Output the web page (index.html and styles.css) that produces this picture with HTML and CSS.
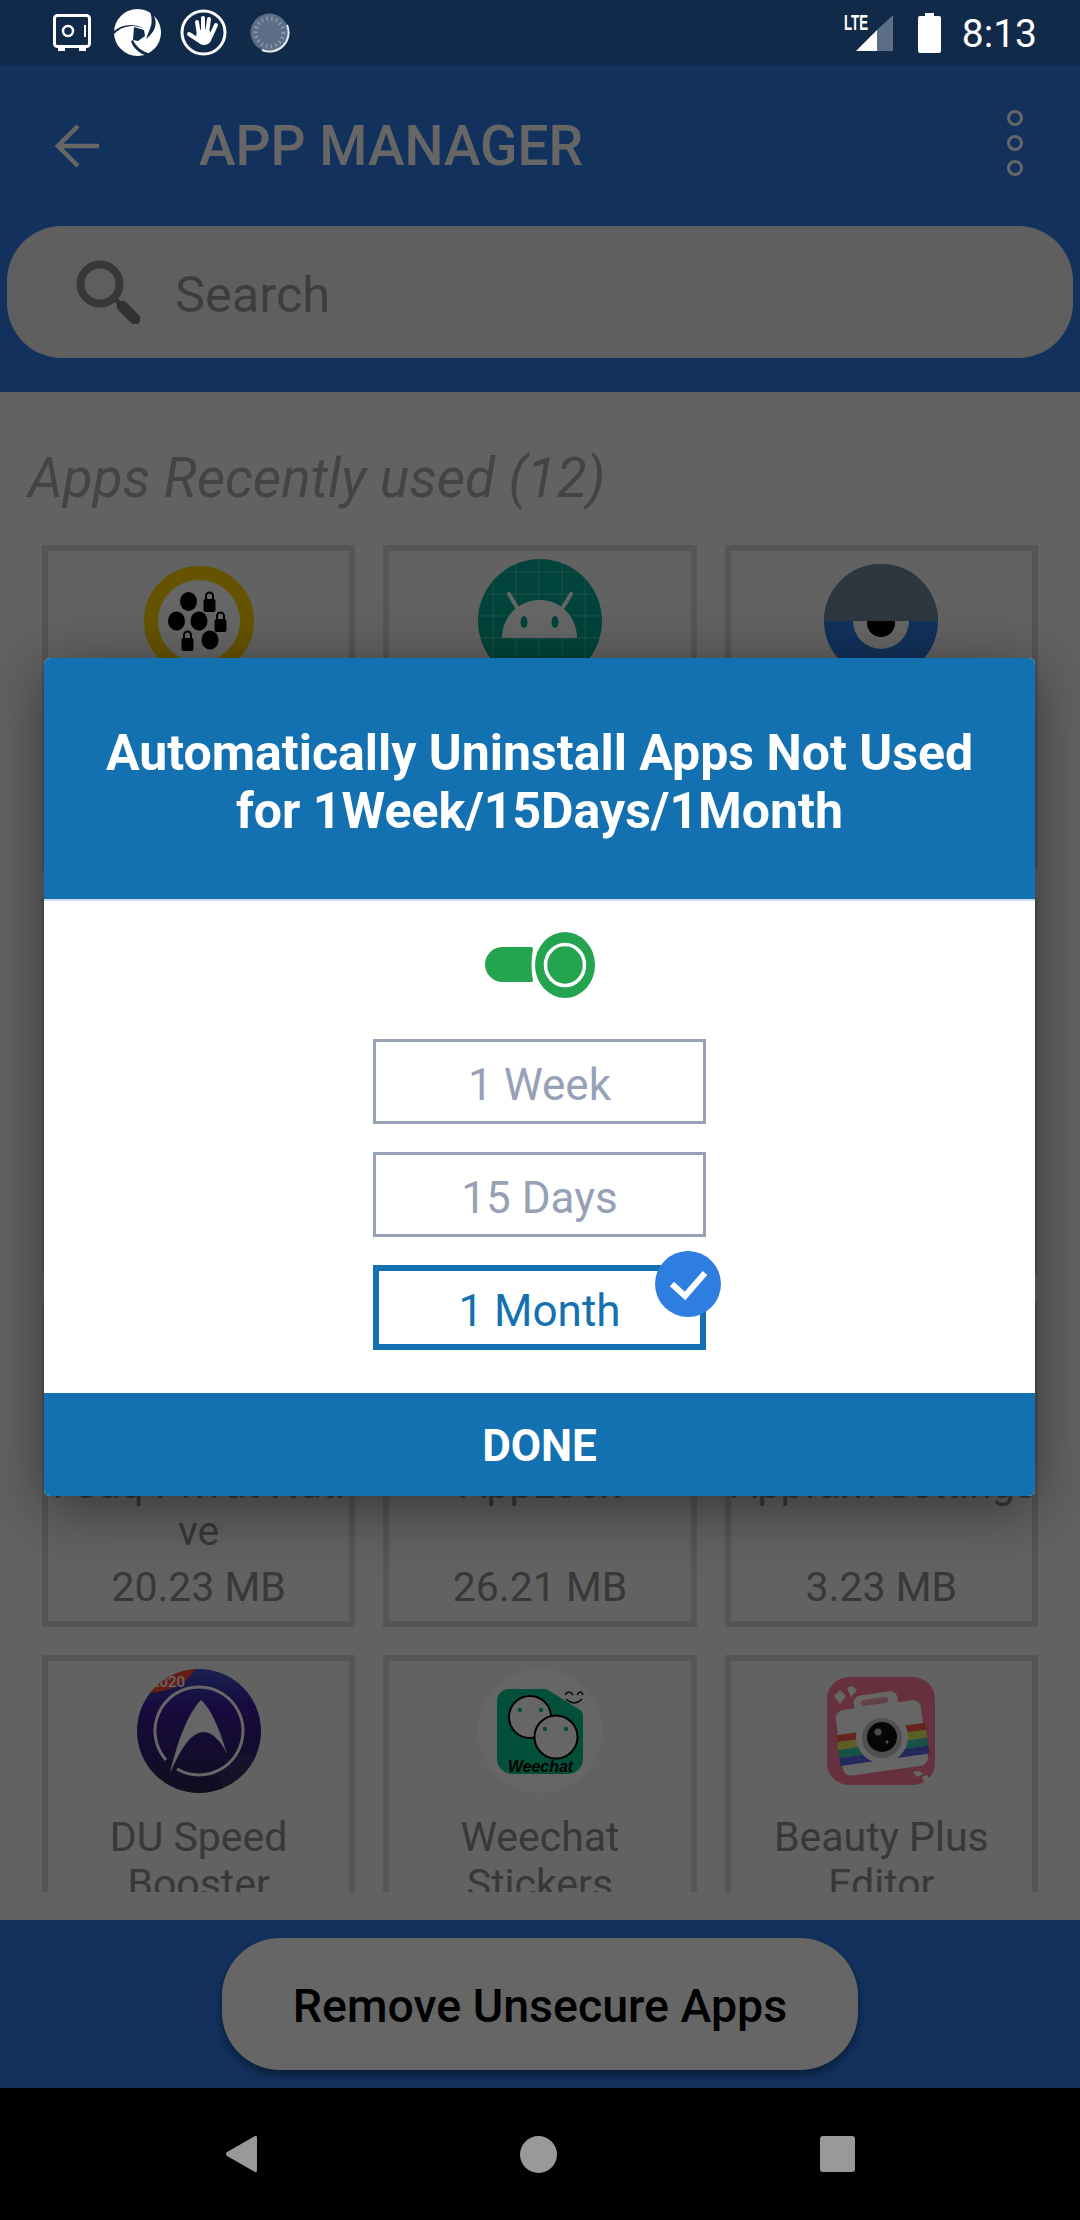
FILE: index.html
```html
<!DOCTYPE html>
<html lang="en">
<head>
  <meta charset="UTF-8" />
  <meta name="viewport" content="width=device-width, initial-scale=1.0"/>
  <title>App Manager</title>
  <link rel="stylesheet" href="styles.css">
</head>
<body>
  <!-- Status bar -->
  <div class="status-bar">
    <div class="status-left">
      <svg class="safe-icon" width="38" height="38" viewBox="0 0 38 38">
        <rect x="1.5" y="1.5" width="35" height="31" rx="3" fill="none" stroke="#fff" stroke-width="3"/>
        <rect x="5" y="33" width="7" height="4" fill="#fff"/>
        <rect x="26" y="33" width="7" height="4" fill="#fff"/>
        <circle cx="15" cy="17" r="5" fill="none" stroke="#fff" stroke-width="2.5"/>
        <rect x="31" y="11" width="2" height="12" fill="#fff"/>
      </svg>
      <svg class="shutter-icon" width="47" height="47" viewBox="0 0 47 47">
        <circle cx="23.5" cy="23.5" r="23.5" fill="#fff"/>
        <path d="M0 22C8 15 19 14 29 19L20 17C12 17 6 19 0 25Z" fill="#112a49"/>
        <path d="M39 5C44 14 42 22 32 30L37 17C38 12 38 8 36 3Z" fill="#112a49"/>
        <path d="M19 31C22 38 29 43 37 45L33 47C25 44 19 39 17 32Z" fill="#112a49"/>
        <path d="M20 18L30 21L31 27L24 32L19 31Z" fill="#112a49"/>
      </svg>
      <svg class="hand-icon" width="47" height="47" viewBox="0 0 47 47">
        <circle cx="23.5" cy="23.5" r="21.5" fill="none" stroke="#fff" stroke-width="3"/>
        <circle cx="24" cy="28" r="8" fill="#fff"/>
        <path d="M19 26L17 13M23 24V9M27 24L29 10M31 27L36 16M18 31L9 25" stroke="#fff" stroke-width="4" stroke-linecap="round" fill="none"/>
      </svg>
      <svg class="loader-icon" width="40" height="40" viewBox="0 0 40 40">
        <circle cx="19.5" cy="19.5" r="19" fill="#5b6d87"/>
        <circle cx="19.5" cy="19.5" r="14" fill="none" stroke="#8a99ae" stroke-width="4" stroke-dasharray="1.6 3.2"/>
        <path d="M37 12A19 19 0 0 1 12 37" fill="none" stroke="#e8ecf0" stroke-width="2"/>
      </svg>
    </div>
    <div class="status-right">
      <svg class="signal-icon" width="50" height="46" viewBox="0 -6 50 46">
        <path d="M12 38L33 17V38Z" fill="#fff"/>
        <path d="M33 17L49 2V38H33Z" fill="#5b6d87"/>
        <text x="0" y="17" class="lte-label" textLength="24" lengthAdjust="spacingAndGlyphs">LTE</text>
      </svg>
      <svg class="battery-icon" width="23" height="40" viewBox="0 0 23 40">
        <path d="M7 0H16V3H21Q23 3 23 5V38Q23 40 21 40H2Q0 40 0 38V5Q0 3 2 3H7Z" fill="#fff"/>
      </svg>
      <span class="clock">8:13</span>
    </div>
  </div>

  <div class="app">
    <header class="app-header">
      <div class="toolbar">
        <svg class="back-icon" width="44" height="44" viewBox="0 0 44 44">
          <path d="M44 22H4M23 2L3 22L23 42" fill="none" stroke="#fff" stroke-width="4.5"/>
        </svg>
        <h1 class="toolbar-title">APP MANAGER</h1>
        <div class="more-dots"><i></i><i></i><i></i></div>
      </div>
      <div class="search-box">
        <svg class="search-icon" width="64" height="64" viewBox="0 0 64 64">
          <circle cx="24" cy="24" r="19.5" fill="none" stroke="#8c8c8c" stroke-width="8"/>
          <path d="M38 38L46 46" stroke="#8c8c8c" stroke-width="5"/>
          <path d="M46 46L59 59" stroke="#7c7c7c" stroke-width="11" stroke-linecap="round"/>
        </svg>
        <span class="search-text">Search</span>
      </div>
    </header>

    <main class="content">
      <h2 class="section-title">Apps Recently used (12)</h2>
      <div class="app-list">
        <!-- row 1, the dialog covers everything under the icons -->
        <div class="card">
          <svg class="card-icon" width="124" height="124" viewBox="0 0 124 124">
            <circle cx="62" cy="62" r="48" fill="#fff" stroke="#ffd000" stroke-width="14"/>
            <ellipse cx="51.5" cy="42.5" rx="8.5" ry="9.5"/>
            <ellipse cx="39.5" cy="62" rx="8.5" ry="9.5"/>
            <ellipse cx="62" cy="62" rx="8.5" ry="9.5"/>
            <ellipse cx="73" cy="81" rx="8.5" ry="9.5"/>
            <g id="lock">
              <rect x="66.500" y="40" width="12" height="13" rx="2"/>
              <path d="M69 41V37A3.500 3.500 0 0 1 76 37V41" fill="none" stroke="#000" stroke-width="2"/>
            </g>
            <use href="#lock" x="11" y="20"/>
            <use href="#lock" x="-22" y="39"/>
          </svg>
          <div class="app-name"></div>
          <div class="app-size"></div>
        </div>
        <div class="card">
          <svg class="card-icon" width="124" height="124" viewBox="0 0 124 124">
            <circle cx="62" cy="62" r="62" fill="#00ab95"/>
            <path d="M0 13H124M0 35H124M0 57H124M0 79H124M0 101H124M15 0V124M38 0V124M61 0V124M84 0V124M107 0V124" stroke="#fff" stroke-opacity=".3" stroke-width="1"/>
            <path d="M24 79C24 58 40 41 62 41C83 41 99 58 99 79Z" fill="#fff"/>
            <path d="M40 50L31 35M84 50L93 35" stroke="#fff" stroke-width="4" stroke-linecap="round"/>
            <ellipse cx="46" cy="63" rx="3.500" ry="6" fill="#00ab95"/>
            <ellipse cx="77" cy="63" rx="3.500" ry="6" fill="#00ab95"/>
          </svg>
          <div class="app-name"></div>
          <div class="app-size"></div>
        </div>
        <div class="card">
          <svg class="card-icon" width="124" height="124" viewBox="0 0 124 124">
            <circle cx="62" cy="62" r="57" fill="#2d7be0"/>
            <ellipse cx="62" cy="62" rx="28" ry="28" fill="#fff"/>
            <circle cx="62" cy="64" r="14"/>
            <path d="M5 62A57 57 0 0 1 119 62Z" fill="#6e8a9e"/>
          </svg>
          <div class="app-name"></div>
          <div class="app-size"></div>
        </div>

        <!-- row 2, fully behind the dialog -->
        <div class="card card-tall"></div>
        <div class="card card-tall"></div>
        <div class="card card-tall"></div>

        <!-- row 3 -->
        <div class="card">
          <div class="card-icon"></div>
          <div class="app-name">Foaq-Privat Nati<br>ve</div>
          <div class="app-size">20.23 MB</div>
        </div>
        <div class="card">
          <div class="card-icon"></div>
          <div class="app-name">AppLock</div>
          <div class="app-size">26.21 MB</div>
        </div>
        <div class="card">
          <div class="card-icon"></div>
          <div class="app-name">Appfam&nbsp;Settings</div>
          <div class="app-size">3.23 MB</div>
        </div>

        <!-- row 4 -->
        <div class="card">
          <svg class="card-icon" width="124" height="124" viewBox="0 0 124 124">
            <defs>
              <linearGradient id="duBg" x1="0" y1="0" x2="0" y2="1">
                <stop offset="0" stop-color="#3f55c8"/>
                <stop offset=".3" stop-color="#3a1c9c"/>
                <stop offset="1" stop-color="#2b1f4c"/>
              </linearGradient>
              <clipPath id="duClip"><circle cx="62" cy="62" r="62"/></clipPath>
            </defs>
            <circle cx="62" cy="62" r="62" fill="url(#duBg)"/>
            <g clip-path="url(#duClip)">
              <path d="M0 0H58C50 14 36 22 12 24H0Z" fill="#ff4a36"/>
              <text x="14" y="18" class="badge-year">2020</text>
              <circle cx="105" cy="108" r="22" fill="#fff" fill-opacity=".06"/>
            </g>
            <path d="M29 91A44 44 0 1 1 40 100" fill="none" stroke="#fff" stroke-width="3"/>
            <path d="M64 31C50 45 40 75 33 104C42 85 52 63 67 63C75 63 84 72 90 85C84 65 76 42 64 31Z" fill="#fff"/>
          </svg>
          <div class="app-name">DU Speed Booster</div>
        </div>
        <div class="card">
          <svg class="card-icon" width="124" height="124" viewBox="0 0 124 124">
            <circle cx="62" cy="62" r="62" fill="#fff"/>
            <path d="M31 20H66A6 6 0 0 1 70 21L102 41A6 6 0 0 1 105 46V90A15 15 0 0 1 90 105H34A15 15 0 0 1 19 90V32A12 12 0 0 1 31 20Z" fill="#06c78f"/>
            <circle cx="52" cy="48" r="21" fill="#fff" stroke="#000" stroke-width="2"/>
            <circle cx="78" cy="68" r="21.500" fill="#fff" stroke="#000" stroke-width="2"/>
            <circle cx="42" cy="41" r="2.200" fill="#06c78f"/>
            <circle cx="63" cy="41" r="2.200" fill="#06c78f"/>
            <circle cx="67" cy="60" r="2.200" fill="#06c78f"/>
            <circle cx="88" cy="60" r="2.200" fill="#06c78f"/>
            <path d="M87 26Q91 20 95 26M99 26Q103 20 105 26M88 30Q96 38 104 30" fill="none" stroke="#222" stroke-width="1.500"/>
            <text x="30" y="103" class="weechat-label" textLength="65" lengthAdjust="spacingAndGlyphs">Weechat</text>
          </svg>
          <div class="app-name">Weechat Stickers</div>
        </div>
        <div class="card">
          <svg class="card-icon" width="124" height="124" viewBox="0 0 124 124">
            <rect x="8" y="8" width="108" height="108" rx="22" fill="#ff7a96"/>
            <g transform="rotate(-8 62 70)">
              <rect x="40" y="24" width="44" height="20" rx="7" fill="#fff"/>
              <rect x="20" y="36" width="86" height="66" rx="8" fill="#fff"/>
              <rect x="47" y="29" width="28" height="6" rx="3" fill="#f7a8b8"/>
              <rect x="18" y="60" width="90" height="7" fill="#ff5a50"/>
              <rect x="18" y="67" width="90" height="8" fill="#e6ea60"/>
              <rect x="18" y="75" width="90" height="8" fill="#3ecab0"/>
              <rect x="18" y="83" width="90" height="8" fill="#5a68e6"/>
            </g>
            <circle cx="63" cy="68" r="26" fill="#fff"/>
            <circle cx="63" cy="69" r="20" fill="#c8c8c8"/>
            <circle cx="63" cy="68" r="15" fill="#111"/>
            <circle cx="59" cy="63" r="3.500" fill="#bbb"/>
            <circle cx="68" cy="73" r="1.500" fill="#ccc"/>
            <path d="M15 27L21 21L27 27L21 35Z" fill="#fff"/>
            <path d="M28 19L33 17L38 21L32 28Z" fill="#fff"/>
            <path d="M94 103L100 102L104 105L98 108Z" fill="#fff"/>
            <path d="M103 108L108 106L110 110L105 113Z" fill="#fff"/>
          </svg>
          <div class="app-name">Beauty Plus Editor</div>
        </div>
      </div>
    </main>

    <footer class="app-footer">
      <button class="remove-btn">Remove Unsecure Apps</button>
    </footer>

    <div class="scrim"></div>

    <!-- Dialog -->
    <section class="dialog">
      <div class="dialog-head">
        Automatically Uninstall Apps Not Used<br>for 1Week/15Days/1Month
      </div>
      <div class="dialog-body">
        <svg class="toggle" width="110" height="66" viewBox="0 0 110 66">
          <path d="M17.500 15H46Q48 15 48 17Q45 33 48 49Q48 50 46 50H17.500A17.500 17.500 0 0 1 17.500 15Z" fill="#24a44f"/>
          <ellipse cx="80" cy="33" rx="30" ry="33" fill="#24a44f"/>
          <ellipse cx="80" cy="33" rx="19.500" ry="20.500" fill="none" stroke="#fff" stroke-width="3.500"/>
        </svg>
        <div class="option">1 Week</div>
        <div class="option">15 Days</div>
        <div class="option option-active">
          1 Month
          <svg class="option-check" width="66" height="66" viewBox="0 0 66 66">
            <circle cx="33" cy="33" r="33" fill="#2e7de1"/>
            <path d="M17 33L30 45L50 22" fill="none" stroke="#fff" stroke-width="6"/>
          </svg>
        </div>
      </div>
      <div class="dialog-done">DONE</div>
    </section>
  </div>

  <!-- Nav bar -->
  <nav class="nav-bar">
    <svg width="32" height="38" viewBox="0 0 32 38"><path d="M30 1Q32 0 32 3V35Q32 38 30 37L2 21Q0 19 2 17Z" fill="#999"/></svg>
    <svg width="37" height="37" viewBox="0 0 37 37"><circle cx="18.500" cy="18.500" r="18.500" fill="#999"/></svg>
    <svg width="35" height="36" viewBox="0 0 35 36"><rect width="35" height="36" rx="3" fill="#999"/></svg>
  </nav>
</body>
</html>
```

FILE: styles.css
```css
* {
  box-sizing: border-box;
  margin: 0;
  padding: 0;
}
body {
  width: 1080px;
  height: 2220px;
  display: flex;
  flex-direction: column;
  overflow: hidden;
  font-family: Roboto, sans-serif;
  background: #000;
}

/* status bar */
.status-bar {
  height: 65px;
  flex: none;
  display: flex;
  justify-content: space-between;
  align-items: center;
  background: #112a49;
  padding: 0 43px 0 53px;
}
.status-left {
  display: flex;
  align-items: center;
}
.shutter-icon { margin-left: 23px; }
.hand-icon { margin-left: 19px; }
.loader-icon { margin-left: 23px; }
.status-right {
  display: flex;
  align-items: center;
}
.signal-icon { margin-bottom: 6px; }
.lte-label {
  font-family: "Liberation Sans", sans-serif;
  font-size: 22px;
  font-weight: 700;
  fill: #fff;
}
.battery-icon { margin-left: 24px; }
.clock {
  margin-left: 21px;
  padding-top: 2px;
  color: #fff;
  font-size: 39px;
  line-height: 44px;
}

.app {
  flex: 1;
  min-height: 0;
  position: relative;
  display: flex;
  flex-direction: column;
}

/* header */
.app-header {
  flex: none;
  height: 327px;
  background: #2d7be6;
  padding: 0 7px;
}
.toolbar {
  height: 161px;
  display: flex;
  align-items: center;
  padding: 0 50px 0 48px;
}
.toolbar-title {
  flex: 1;
  margin-left: 100px;
  color: #fff;
  font-size: 55px;
  font-weight: 500;
}
.more-dots {
  display: flex;
  flex-direction: column;
  gap: 9px;
  margin-bottom: 5px;
}
.more-dots i {
  display: block;
  width: 16px;
  height: 16px;
  border: 3px solid #fff;
  border-radius: 50%;
}
.search-box {
  height: 132px;
  display: flex;
  align-items: center;
  background: #eee;
  border-radius: 55px;
  padding-left: 69px;
}
.search-text {
  margin-left: 35px;
  padding-top: 4px;
  color: #9a9a9a;
  font-size: 50.500px;
}

/* list */
.content {
  flex: 1;
  min-height: 0;
  display: flex;
  flex-direction: column;
  background: #f5f5f5;
  padding: 51px 0 28px;
}
.section-title {
  height: 70px;
  padding-left: 28px;
  color: #ababab;
  font-size: 55px;
  font-style: italic;
  font-weight: 400;
  line-height: 70px;
}
.app-list {
  flex: 1;
  min-height: 0;
  margin-top: 32px;
  padding: 0 42px;
  overflow: hidden;
  display: grid;
  grid-template-columns: repeat(3, minmax(0, 1fr));
  gap: 28px;
  align-content: start;
}
.card {
  height: 325px;
  border: 6px solid #d4d4d4;
  padding: 8px 0 10px;
  text-align: center;
  color: #8c8c8c;
  font-size: 41px;
  line-height: 47px;
}
.card-tall { height: 376px; }
.card-icon {
  display: block;
  width: 124px;
  height: 124px;
  margin: 0 auto 21px;
}
.app-name {
  min-height: 94px;
  margin-bottom: 8px;
}
.app-size {
  min-height: 48px;
  line-height: 48px;
}
.badge-year {
  font-family: Roboto, sans-serif;
  font-size: 15px;
  font-weight: 500;
  fill: #fff;
}
.weechat-label {
  font-family: "Liberation Sans", sans-serif;
  font-size: 16px;
  font-style: italic;
  font-weight: 700;
}

/* bottom */
.app-footer {
  flex: none;
  height: 168px;
  display: flex;
  justify-content: center;
  align-items: center;
  background: #2d7be6;
}
.remove-btn {
  width: 636px;
  height: 132px;
  padding-top: 4px;
  border: none;
  border-radius: 58px;
  background: #fff;
  color: #000;
  font-family: Roboto, sans-serif;
  font-size: 46.500px;
  font-weight: 500;
  box-shadow: 0 5px 10px rgba(0,0,0,0.4);
}

.scrim {
  position: absolute;
  inset: 0;
  background: rgba(0,0,0,0.6);
}

/* dialog */
.dialog {
  position: absolute;
  top: 593px;
  left: 44px;
  width: 991px;
  height: 838px;
  display: flex;
  flex-direction: column;
  border-radius: 6px;
  overflow: hidden;
  background: #fff;
  box-shadow: 0 12px 60px rgba(0,0,0,0.45);
}
.dialog-head {
  height: 243px;
  flex: none;
  display: flex;
  align-items: center;
  justify-content: center;
  padding-top: 6px;
  text-align: center;
  background: #1370b1;
  border-bottom: 2px solid #cfe0ec;
  color: #fff;
  font-size: 50px;
  font-weight: 700;
  line-height: 58px;
}
.dialog-body {
  flex: 1;
  display: flex;
  flex-direction: column;
  align-items: center;
  padding-top: 31px;
}
.toggle {
  margin-bottom: 41px;
}
.option {
  position: relative;
  width: 333px;
  height: 85px;
  margin-bottom: 28px;
  padding-top: 6px;
  border: 3px solid #96a1b5;
  color: #96a1b5;
  font-size: 44px;
  line-height: 75px;
  text-align: center;
}
.option-active {
  border: 6px solid #1370b1;
  color: #1370b1;
  line-height: 69px;
}
.option-check {
  position: absolute;
  top: -20px;
  right: -21px;
}
.dialog-done {
  height: 103px;
  flex: none;
  padding-top: 3px;
  background: #1370b1;
  color: #fff;
  font-size: 44px;
  font-weight: 700;
  line-height: 100px;
  text-align: center;
}

/* nav bar */
.nav-bar {
  height: 132px;
  flex: none;
  position: relative;
  display: flex;
  justify-content: center;
  align-items: center;
  gap: 263px;
  background: #000;
}
```
